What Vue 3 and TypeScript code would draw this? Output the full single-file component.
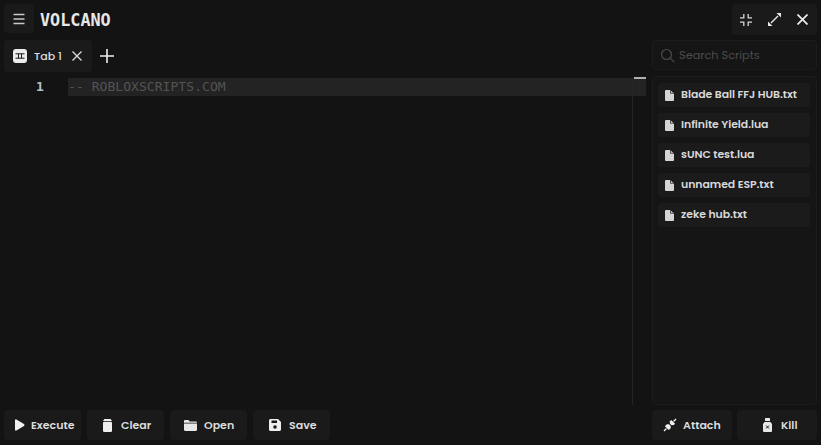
<script setup lang="ts">
const scripts: string[] = ['Blade Ball FFJ HUB.txt', 'Infinite Yield.lua', 'sUNC test.lua', 'unnamed ESP.txt', 'zeke hub.txt']
</script>

<template>
  <div class="app">
    <header class="top">
      <div class="left">
        <button class="menu" aria-label="Menu">
          <svg width="14" height="14" viewBox="0 0 14 14" fill="none" stroke="#c9c9c9" stroke-width="1.3"><path d="M1.500 2.500h11M1.500 7h11M1.500 11.500h11" /></svg>
        </button>
        <span class="title">VOLCANO</span>
      </div>
      <div class="win">
        <svg width="12" height="12" viewBox="0 0 12 12" fill="none" stroke="#d8d8d8" stroke-width="1.300"><path d="M3.800 0v3.800H0M8.200 0v3.800H12M3.800 12V8.200H0M8.200 12V8.200H12" /></svg>
        <svg width="15" height="15" viewBox="0 0 15 15"><path d="M4 11 11 4" stroke="#e6e6e6" stroke-width="1.400" /><path d="M9.500 1H14v4.500zM5.500 14H1V9.500z" fill="#e6e6e6" /></svg>
        <svg width="11" height="11" viewBox="0 0 11 11" fill="none" stroke="#eeeeee" stroke-width="1.700"><path d="m.5.500 10 10M10.500.500l-10 10" /></svg>
      </div>
    </header>

    <div class="middle">
      <section class="work">
        <div class="tabs">
          <div class="tab">
            <svg width="14" height="14" viewBox="0 0 14 14"><rect width="14" height="14" rx="3" fill="#ececec" /><path d="M2.500 4.800h9M2.500 9.200h9M5.500 4.800v4.400M8.500 4.800v4.400" stroke="#1a1a1a" stroke-width="1" fill="none" /></svg>
            <span>Tab 1</span>
            <svg class="x" width="10" height="10" viewBox="0 0 10 10" fill="none" stroke="#dedede" stroke-width="1.300"><path d="m.5.500 9 9M9.500.500l-9 9" /></svg>
          </div>
          <svg class="plus" width="14" height="14" viewBox="0 0 14 14" fill="none" stroke="#efefef" stroke-width="1.600"><path d="M7 0v14M0 7h14" /></svg>
        </div>
        <div class="editor">
          <div class="gutter">1</div>
          <div class="code">
            <div class="line">-- ROBLOXSCRIPTS.COM</div>
            <div class="ruler"><i></i></div>
          </div>
        </div>
      </section>

      <aside class="side">
        <label class="search">
          <svg width="15" height="15" viewBox="0 0 15 15" fill="none" stroke="#4b4b4b" stroke-width="1.200"><circle cx="6.500" cy="6.500" r="5" /><path d="m10.200 10.200 4 4" /></svg>
          <span>Search Scripts</span>
        </label>
        <ul class="list">
          <li v-for="s in scripts" :key="s">
            <svg width="9" height="11" viewBox="0 0 9 11"><path d="M0 1a1 1 0 0 1 1-1h4.200L9 3.600V10a1 1 0 0 1-1 1H1a1 1 0 0 1-1-1z" fill="#d4d4d4" /><path d="M5.500 0v3.300H9" fill="none" stroke="#1a1a1a" stroke-width=".7" /></svg>
            <span>{{ s }}</span>
          </li>
        </ul>
      </aside>
    </div>

    <footer class="bottom">
      <div class="group">
        <button class="btn execute">
          <svg width="11" height="12" viewBox="0 0 11 12"><path d="M1 1.200c0-.8.800-1.200 1.400-.8l7.600 4.600c.6.400.6 1.600 0 2l-7.600 4.600c-.6.400-1.400 0-1.400-.8z" fill="#f0f0f0" /></svg>
          Execute
        </button>
        <button class="btn clear">
          <svg width="9" height="13" viewBox="0 0 9 13"><path d="M1.400 0h6.200L9 2H0z" fill="#efefef" /><rect y="2.800" width="9" height="10.200" rx="1.200" fill="#efefef" /></svg>
          Clear
        </button>
        <button class="btn open">
          <svg width="13" height="11" viewBox="0 0 13 11"><path d="M0 1.200C0 .5.500 0 1.200 0h3.200l1.300 1.400h6c.7 0 1.300.5 1.300 1.200v.2H0z" fill="#e8e8e8" /><path d="M0 3.600h13v6.200c0 .7-.5 1.200-1.200 1.200H1.200C.5 11 0 10.500 0 9.800z" fill="#e8e8e8" /></svg>
          Open
        </button>
        <button class="btn save">
          <svg width="12" height="12" viewBox="0 0 12 12"><path d="M1.500 0H9l3 3v7.500c0 .8-.7 1.500-1.500 1.500h-9C.7 12 0 11.300 0 10.500v-9C0 .7.700 0 1.500 0z" fill="#eeeeee" /><rect x="2.500" y="1.500" width="5.500" height="2.500" fill="#1a1a1a" /><circle cx="6" cy="8" r="1.800" fill="#1a1a1a" /></svg>
          Save
        </button>
      </div>
      <div class="group right">
        <button class="btn attach">
          <svg width="14" height="14" viewBox="0 0 14 14"><g transform="rotate(45 7 7)"><path d="M7 -1.500V2M7 12v3.500" stroke="#f0f0f0" stroke-width="1.300" fill="none" /><path d="M4.300 2.500h5.400v1.800L8.200 6H5.800L4.300 4.300z" fill="#f0f0f0" /><path d="M5.800 7.200h2.400l1.500 1.600v2.700H4.300V8.800z" fill="#f0f0f0" /></g></svg>
          Attach
        </button>
        <button class="btn kill">
          <svg width="9" height="14" viewBox="0 0 9 14"><rect x="2" y="0" width="5" height="3" rx=".6" fill="#e8e8e8" /><path d="M1.500 4h6L9 6v7a1 1 0 0 1-1 1H1a1 1 0 0 1-1-1V6z" fill="#e8e8e8" /><path d="m3 7.500 3 3M6 7.500l-3 3" stroke="#1a1a1a" stroke-width="1" /></svg>
          Kill
        </button>
      </div>
    </footer>
  </div>
</template>

<style>
html, body { margin: 0; background: #131313; }
</style>

<style scoped>
.app {
  width: 821px;
  height: 445px;
  box-sizing: border-box;
  padding: 4px 4px 5px 4px;
  background: #131313;
  display: flex;
  flex-direction: column;
  font-family: Poppins, Lato, "Open Sans", sans-serif;
  color: #dcdcdc;
  overflow: hidden;
}
.top { height: 31px; display: flex; justify-content: space-between; flex: none; }
.left { display: flex; align-items: flex-start; gap: 6px; }
.menu {
  width: 30px; height: 29px; border: 0; padding: 0; border-radius: 4px; background: #1a1a1a;
  display: flex; align-items: center; justify-content: center;
}
.title { font: 700 16.800px/1 "DejaVu Sans Mono", monospace; color: #e8e8e8; margin-top: 8px; }
.win {
  width: 85px; height: 31px; border-radius: 4px; background: #1a1a1a;
  display: flex; align-items: center; gap: 15px; padding-left: 8px; box-sizing: border-box;
}
.middle { flex: 1; display: flex; gap: 6px; min-height: 0; margin-top: 5px; }
.work { flex: 1; display: flex; flex-direction: column; min-width: 0; }
.tabs { display: flex; align-items: center; height: 32px; flex: none; gap: 8px; }
.tab {
  width: 88px; height: 32px; box-sizing: border-box; padding-left: 9px; border-radius: 4px; background: #1a1a1a;
  display: flex; align-items: center; font-size: 11px; font-weight: 500; color: #dedede; white-space: nowrap;
}
.tab span { margin-left: 7px; }
.tab .x { margin-left: 10px; }
.editor { flex: 1; display: flex; padding-top: 6px; font: 13.100px/18px "DejaVu Sans Mono", monospace; }
.gutter { width: 64px; height: 17px; line-height: 17px; box-sizing: border-box; padding-left: 32px; color: #b5c0cc; font-weight: 700; font-size: 13px; }
.code { flex: 1; position: relative; }
.line { height: 18px; background: #232323; color: #535353; }
.ruler {
  position: absolute; right: 13px; top: 0; bottom: 0; width: 1px; background: #252525;
}
.ruler i { position: absolute; top: -1px; right: -13px; width: 12px; height: 2px; background: #b0b0b0; }
.side { width: 165px; flex: none; display: flex; flex-direction: column; gap: 6px; }
.search {
  height: 30px; box-sizing: border-box; border: 1px solid #1c1c1c; border-radius: 4px; background: #151515;
  display: flex; align-items: center; gap: 4px; padding-left: 7px; font-size: 11.300px; color: #4c4c4c;
}
.list {
  flex: 1; margin: 0; padding: 6px 6px 6px 5px; list-style: none; border: 1px solid #1c1c1c; border-radius: 4px;
  display: flex; flex-direction: column; gap: 6px; box-sizing: border-box; background: #151515;
}
.list li {
  height: 24px; box-sizing: border-box; padding-left: 7px; border-radius: 3px; background: #1b1b1b;
  display: flex; align-items: center; gap: 7px; font-size: 10.900px; font-weight: 600; letter-spacing: -0.05px; color: #d8d8d8; white-space: nowrap;
}
.bottom { height: 30px; flex: none; margin-top: 5px; display: flex; justify-content: space-between; }
.group { display: flex; gap: 6px; }
.group.right { gap: 5px; }
.btn {
  width: 77px; height: 30px; border: 0; padding: 0; border-radius: 4px; background: #1a1a1a;
  display: flex; align-items: center; box-sizing: border-box;
  font-family: inherit; font-size: 11px; font-weight: 600; color: #dcdcdc;
}
.execute { padding-left: 10px; gap: 6px; }
.clear { padding-left: 16px; gap: 9px; }
.open { padding-left: 14px; gap: 7px; }
.save { padding-left: 16px; gap: 8px; }
.attach { width: 80px; padding-left: 11px; gap: 6px; }
.kill { width: 80px; padding-left: 26px; gap: 9px; }
</style>
